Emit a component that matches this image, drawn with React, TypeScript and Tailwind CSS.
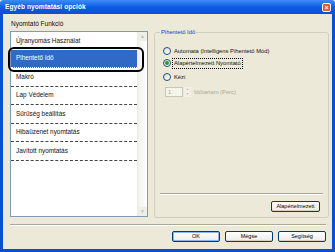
import { useState } from 'react'

const items = [
  'Újranyomás Használat',
  'Pihentető Idő',
  'Makró',
  'Lap Védelem',
  'Sűrűség beállítás',
  'Hibaüzenet nyomtatás',
  'Javított nyomtatás',
]

const Radio = ({ checked, label, focus }: { checked?: boolean; label: string; focus?: boolean }) => (
  <div className="flex items-center h-[10px]">
    <span className="w-[8px] h-[8px] rounded-full border border-[#1c5180] bg-gradient-to-br from-[#dcdcd5] to-white flex items-center justify-center">
      {checked && <span className="w-[4px] h-[4px] rounded-full bg-[#21a121]" />}
    </span>
    <span className={`ml-[2px] px-[1px] leading-[9px] ${focus ? 'outline outline-1 outline-dotted outline-black' : ''}`}>
      {label}
    </span>
  </div>
)

const XpButton = ({ label, primary, w = 'w-[48px]' }: { label: string; primary?: boolean; w?: string }) => (
  <button
    className={`${w} h-[11px] rounded-[2px] border border-[#003c74] bg-gradient-to-b from-white to-[#ecebe6] text-[5.5px] leading-none text-black ${
      primary ? 'shadow-[inset_0_0_0_1px_#8fb4f0]' : 'shadow-[inset_0_-1px_0_#d6d0c5]'
    }`}
  >
    {label}
  </button>
)

export default function App() {
  const [selected] = useState(1)

  return (
    <div
      className="w-[335px] h-[252px] flex flex-col overflow-hidden text-[5.8px] text-[#111]"
      style={{ fontFamily: '"Liberation Sans", Arial, sans-serif' }}
    >
      {/* title bar */}
      <div className="h-[14px] flex items-center justify-between pl-[5px] pr-[4px] rounded-t-[3px] bg-gradient-to-b from-[#3d8cf7] via-[#0a5de6] to-[#0a4fd3]">
        <span className="text-white font-bold text-[6.5px] tracking-[0.1px]">Egyéb nyomtatási opciók</span>
        <span className="w-[9px] h-[9px] rounded-[2px] border border-white bg-[#e0582e] flex items-center justify-center text-white text-[7px] leading-none font-bold">
          ×
        </span>
      </div>

      {/* body */}
      <div className="flex-1 flex flex-col bg-[#ece9d8] border-x-[3px] border-b-[3px] border-[#0a4fd3] pt-[5px] pl-[7px] pr-[3px]">
        <div className="flex gap-[6px]">
          {/* left column */}
          <div className="w-[138px] flex flex-col">
            <div className="h-[12px] pl-[1px] leading-[10px] text-[6.5px]">Nyomtató Funkció</div>
            <div className="relative h-[186px] border border-[#7f9db9] bg-white flex text-[6.4px]">
              <div className="flex-1 flex flex-col">
                {items.map((it, i) => (
                  <div
                    key={it}
                    className={`flex items-center pl-[5px] ${i === 0 ? 'h-[17.5px]' : 'h-[18.5px]'} ${
                      i === selected
                        ? 'bg-[#3169c6] text-white border-b border-dotted border-white'
                        : i >= 2
                        ? 'border-b border-dashed border-[#444]'
                        : ''
                    }`}
                  >
                    {it}
                  </div>
                ))}
              </div>
              <div className="w-[10px] flex flex-col justify-between bg-gradient-to-r from-[#f3f1ec] to-[#fefefb] border-l border-[#eeede5]">
                <div className="h-[9px] bg-[#efeee7] rounded-[1px] flex items-center justify-center text-[#c2c1b6] text-[5px]">▲</div>
                <div className="h-[9px] bg-[#efeee7] rounded-[1px] flex items-center justify-center text-[#c2c1b6] text-[5px]">▼</div>
              </div>
              {/* highlight ring around selected item */}
              <div className="absolute left-[-3px] top-[15px] w-[136px] h-[25px] rounded-[6px] border-2 border-black pointer-events-none" />
            </div>
          </div>

          {/* right column */}
          <div className="w-[175px] pt-[13px]">
            <div className="relative h-[186px] rounded-[3px] border border-[#d0d0bf] flex flex-col px-[6px]">
              <span className="absolute left-[5px] top-[-4px] px-[1px] bg-[#ece9d8] text-[#0046d5] leading-[7px]">
                Pihentető Idő
              </span>
              <div className="flex flex-col mt-[13px] pl-[2px]">
                <Radio label="Automata (Intelligens Pihentető Mód)" />
                <div className="h-[2px]" />
                <Radio checked focus label="Alapértelmezett Nyomtató" />
                <div className="h-[4px]" />
                <Radio label="Kézi" />
              </div>
              <div className="flex items-center mt-[5px] ml-[4px] h-[10px]">
                <div className="w-[18px] h-[10px] border border-[#c9c7ba] bg-[#f5f4ea] text-[#aca899] pl-[2px] leading-[8px]">1</div>
                <div className="w-[7px] h-[10px] ml-[1px] flex flex-col bg-[#f1efe6] text-[#c4c2b5] text-[3.5px] leading-none">
                  <span className="h-[5px] flex items-center justify-center">▲</span>
                  <span className="h-[5px] flex items-center justify-center">▼</span>
                </div>
                <span className="ml-[3px] text-[#aca899]">Időtartam (Perc)</span>
              </div>
              <div className="flex-1" />
              <div className="h-[2px] border-t border-[#aca899] border-b border-b-white -mx-[1px]" />
              <div className="flex justify-end mt-[6px] mb-[5px] pr-[2px]">
                <XpButton label="Alapértelmezett" w="w-[49px]" />
              </div>
            </div>
          </div>
        </div>

        <div className="mt-[6px] mr-[3px] h-[2px] border-t border-[#aca899] border-b border-b-white" />

        <div className="flex justify-end gap-[5px] mt-[5px] pr-[3px]">
          <XpButton label="OK" primary />
          <XpButton label="Mégse" />
          <XpButton label="Segítség" />
        </div>
      </div>
    </div>
  )
}
